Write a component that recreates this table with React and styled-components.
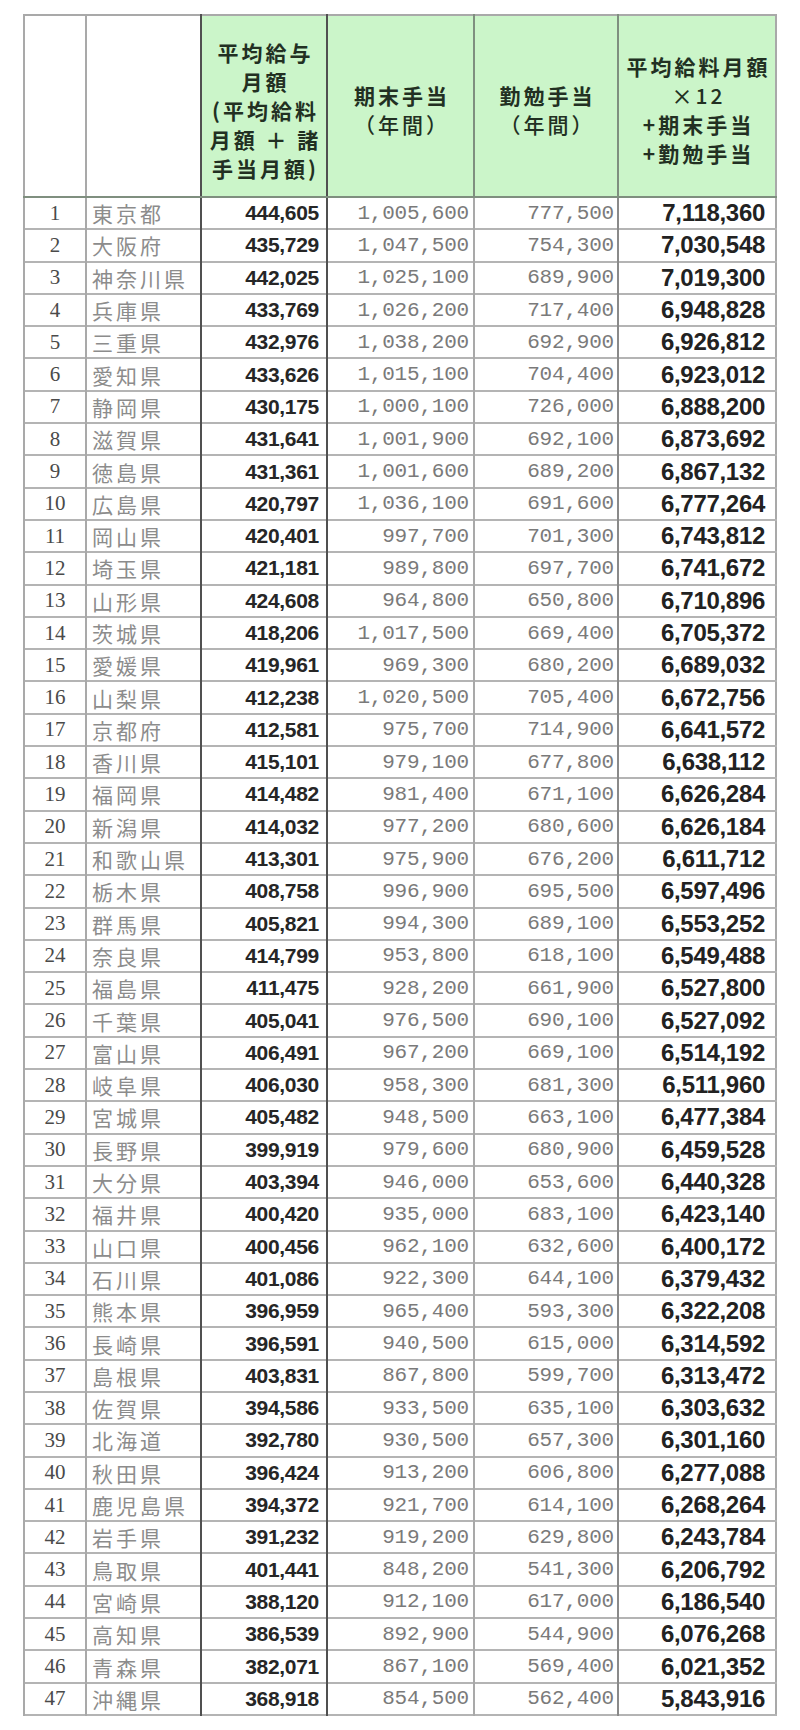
import React from 'react';
import styled, { createGlobalStyle } from 'styled-components';

const GlobalStyle = createGlobalStyle`
  html, body {
    margin: 0;
    padding: 0;
    background: #ffffff;
  }
`;

const rows = [
  ['東京都', '444,605', '1,005,600', '777,500', '7,118,360'],
  ['大阪府', '435,729', '1,047,500', '754,300', '7,030,548'],
  ['神奈川県', '442,025', '1,025,100', '689,900', '7,019,300'],
  ['兵庫県', '433,769', '1,026,200', '717,400', '6,948,828'],
  ['三重県', '432,976', '1,038,200', '692,900', '6,926,812'],
  ['愛知県', '433,626', '1,015,100', '704,400', '6,923,012'],
  ['静岡県', '430,175', '1,000,100', '726,000', '6,888,200'],
  ['滋賀県', '431,641', '1,001,900', '692,100', '6,873,692'],
  ['徳島県', '431,361', '1,001,600', '689,200', '6,867,132'],
  ['広島県', '420,797', '1,036,100', '691,600', '6,777,264'],
  ['岡山県', '420,401', '997,700', '701,300', '6,743,812'],
  ['埼玉県', '421,181', '989,800', '697,700', '6,741,672'],
  ['山形県', '424,608', '964,800', '650,800', '6,710,896'],
  ['茨城県', '418,206', '1,017,500', '669,400', '6,705,372'],
  ['愛媛県', '419,961', '969,300', '680,200', '6,689,032'],
  ['山梨県', '412,238', '1,020,500', '705,400', '6,672,756'],
  ['京都府', '412,581', '975,700', '714,900', '6,641,572'],
  ['香川県', '415,101', '979,100', '677,800', '6,638,112'],
  ['福岡県', '414,482', '981,400', '671,100', '6,626,284'],
  ['新潟県', '414,032', '977,200', '680,600', '6,626,184'],
  ['和歌山県', '413,301', '975,900', '676,200', '6,611,712'],
  ['栃木県', '408,758', '996,900', '695,500', '6,597,496'],
  ['群馬県', '405,821', '994,300', '689,100', '6,553,252'],
  ['奈良県', '414,799', '953,800', '618,100', '6,549,488'],
  ['福島県', '411,475', '928,200', '661,900', '6,527,800'],
  ['千葉県', '405,041', '976,500', '690,100', '6,527,092'],
  ['富山県', '406,491', '967,200', '669,100', '6,514,192'],
  ['岐阜県', '406,030', '958,300', '681,300', '6,511,960'],
  ['宮城県', '405,482', '948,500', '663,100', '6,477,384'],
  ['長野県', '399,919', '979,600', '680,900', '6,459,528'],
  ['大分県', '403,394', '946,000', '653,600', '6,440,328'],
  ['福井県', '400,420', '935,000', '683,100', '6,423,140'],
  ['山口県', '400,456', '962,100', '632,600', '6,400,172'],
  ['石川県', '401,086', '922,300', '644,100', '6,379,432'],
  ['熊本県', '396,959', '965,400', '593,300', '6,322,208'],
  ['長崎県', '396,591', '940,500', '615,000', '6,314,592'],
  ['島根県', '403,831', '867,800', '599,700', '6,313,472'],
  ['佐賀県', '394,586', '933,500', '635,100', '6,303,632'],
  ['北海道', '392,780', '930,500', '657,300', '6,301,160'],
  ['秋田県', '396,424', '913,200', '606,800', '6,277,088'],
  ['鹿児島県', '394,372', '921,700', '614,100', '6,268,264'],
  ['岩手県', '391,232', '919,200', '629,800', '6,243,784'],
  ['鳥取県', '401,441', '848,200', '541,300', '6,206,792'],
  ['宮崎県', '388,120', '912,100', '617,000', '6,186,540'],
  ['高知県', '386,539', '892,900', '544,900', '6,076,268'],
  ['青森県', '382,071', '867,100', '569,400', '6,021,352'],
  ['沖縄県', '368,918', '854,500', '562,400', '5,843,916'],
];

const Page = styled.div`
  padding: 14px 0 0 23px;
`;

const Table = styled.table`
  width: 752px;
  table-layout: fixed;
  border-collapse: collapse;
  border: 2px solid #a9a9a9;
`;

const HeadRow = styled.tr`
  height: 182px;
`;

const HeadCell = styled.th`
  background: ${(p) => (p.$green ? '#cbf5c9' : '#ffffff')};
  border-left: 2px solid ${(p) => p.$line || '#a9a9a9'};
  border-bottom: 2px solid #7f8f7f;
  padding: 8px 0 0;
  vertical-align: middle;
  text-align: center;
  font-family: 'Noto Sans CJK JP', sans-serif;
  font-weight: 700;
  font-size: 21px;
  line-height: 29px;
  letter-spacing: 3px;
  color: #223022;
`;

const Line = styled.div`
  white-space: nowrap;
  margin-right: -3px;
  font-weight: ${(p) => (p.$light ? 500 : 700)};
`;

const Row = styled.tr`
  height: 32.3px;
  border-bottom: 2px solid #b4b4b4;
`;

const Cell = styled.td`
  padding: 0;
  border-left: 2px solid ${(p) => p.$line || '#a9a9a9'};
  vertical-align: middle;
  white-space: nowrap;
  overflow: hidden;
`;

const RankCell = styled(Cell)`
  text-align: center;
  font-family: 'Liberation Serif', serif;
  font-size: 21px;
  color: #4a4a4a;
`;

const NameCell = styled(Cell)`
  padding-left: 5px;
  font-family: 'Noto Sans CJK JP', sans-serif;
  font-weight: 400;
  font-size: 21px;
  letter-spacing: 3px;
  color: #8c8c8c;
`;

const SalaryCell = styled(Cell)`
  text-align: right;
  padding-right: 7px;
  font-family: 'Liberation Sans', Arial, sans-serif;
  font-weight: 700;
  font-size: 21px;
  letter-spacing: -0.3px;
  color: #262626;
`;

const BonusCell = styled(Cell)`
  text-align: right;
  padding-right: ${(p) => p.$pad || 4}px;
  font-family: 'Liberation Mono', monospace;
  font-size: 21px;
  letter-spacing: -0.2px;
  color: #7a7a7a;
`;

const TotalCell = styled(Cell)`
  text-align: right;
  padding-right: 10px;
  font-family: 'Liberation Sans', Arial, sans-serif;
  font-weight: 700;
  font-size: 24px;
  letter-spacing: -0.3px;
  color: #222222;
`;

const DARK = '#505050';

export default function App() {
  return (
    <Page>
      <GlobalStyle />
      <Table>
        <colgroup>
          <col style={{ width: 62 }} />
          <col style={{ width: 115 }} />
          <col style={{ width: 126 }} />
          <col style={{ width: 147 }} />
          <col style={{ width: 144 }} />
          <col style={{ width: 158 }} />
        </colgroup>
        <thead>
          <HeadRow>
            <HeadCell />
            <HeadCell />
            <HeadCell $green $line={DARK}>
              <Line>平均給与</Line>
              <Line>月額</Line>
              <Line>(平均給料</Line>
              <Line>月額 ＋ 諸</Line>
              <Line>手当月額)</Line>
            </HeadCell>
            <HeadCell $green $line={DARK}>
              <Line>期末手当</Line>
              <Line $light>（年間）</Line>
            </HeadCell>
            <HeadCell $green $line="#7f8f7f">
              <Line>勤勉手当</Line>
              <Line $light>（年間）</Line>
            </HeadCell>
            <HeadCell $green $line="#7f8f7f">
              <Line>平均給料月額</Line>
              <Line $light>×12</Line>
              <Line>+期末手当</Line>
              <Line>+勤勉手当</Line>
            </HeadCell>
          </HeadRow>
        </thead>
        <tbody>
          {rows.map(([name, salary, term, diligence, total], i) => (
            <Row key={name}>
              <RankCell>{i + 1}</RankCell>
              <NameCell>{name}</NameCell>
              <SalaryCell $line={DARK}>{salary}</SalaryCell>
              <BonusCell $line={DARK}>{term}</BonusCell>
              <BonusCell $pad={3}>{diligence}</BonusCell>
              <TotalCell $line="#8a8a8a">{total}</TotalCell>
            </Row>
          ))}
        </tbody>
      </Table>
    </Page>
  );
}
